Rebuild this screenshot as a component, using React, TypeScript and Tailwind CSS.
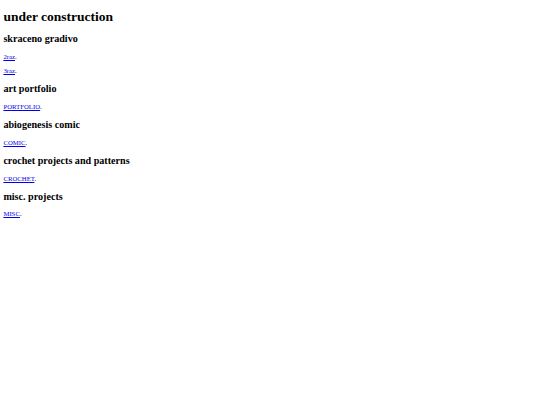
const sections: { title: string; links: string[] }[] = [
  { title: "skraceno gradivo", links: ["2raz", "3raz"] },
  { title: "art portfolio", links: ["PORTFOLIO"] },
  { title: "abiogenesis comic", links: ["COMIC"] },
  { title: "crochet projects and patterns", links: ["CROCHET"] },
  { title: "misc. projects", links: ["MISC"] },
];

export default function App() {
  return (
    <div className="min-h-[405px] bg-white text-black font-['Liberation_Serif','Times_New_Roman',serif] leading-[1.14] px-[3.375px] pt-[8.5px] pb-[3.375px]">
      <h1 className="text-[13.5px] font-bold mt-0 mb-[9px]">under construction</h1>
      {sections.map((s) => (
        <div key={s.title}>
          <h2 className="text-[10.125px] font-bold my-[8.3px]">{s.title}</h2>
          {s.links.map((l) => (
            <p key={l} className="text-[6.75px] my-[6.7px]">
              <a href="#" className="text-[#0000ee] underline">
                {l}
              </a>
              .
            </p>
          ))}
        </div>
      ))}
    </div>
  );
}
